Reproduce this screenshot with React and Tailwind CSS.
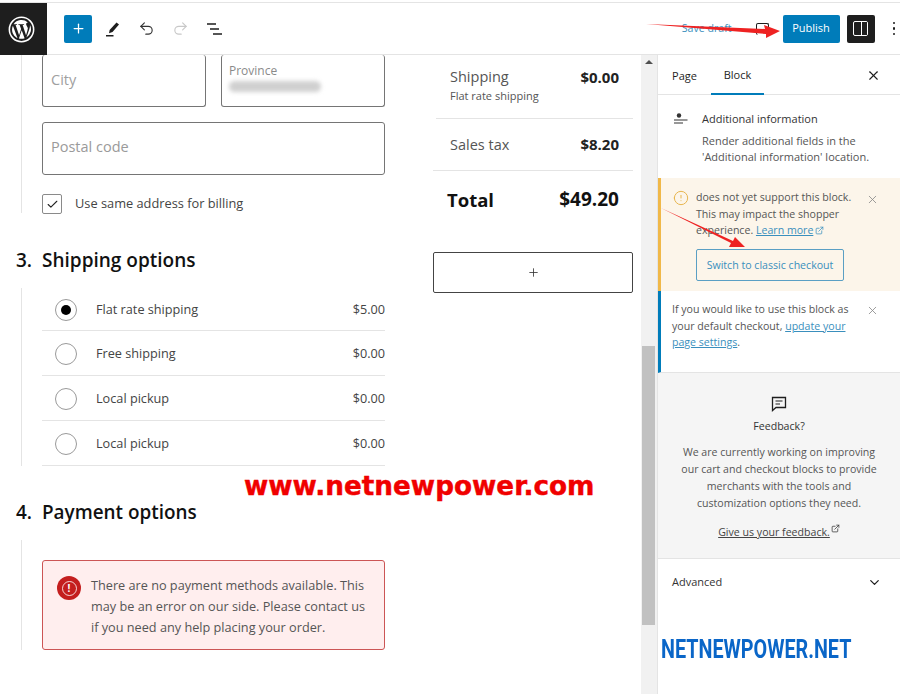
import React from 'react';
import { Plus, Undo2, Redo2, X, ChevronDown, Check, ExternalLink, Info } from 'lucide-react';

const shippingOptions = [
  { label: 'Flat rate shipping', price: '$5.00', checked: true, rowClass: 'h-[43px]' },
  { label: 'Free shipping', price: '$0.00', rowClass: 'h-[45px]' },
  { label: 'Local pickup', price: '$0.00', rowClass: 'h-[45px]' },
  { label: 'Local pickup', price: '$0.00', rowClass: 'h-[45px]' },
];

const WpLogo = () => (
  <svg width="27" height="27" viewBox="0 0 28 28" fill="none">
    <circle cx="14" cy="14" r="12.6" stroke="#fff" strokeWidth="1.6" />
    <path
      d="M4.2 14c0 3.900 2.300 7.300 5.600 8.900L5.100 10.100A9.800 9.800 0 0 0 4.200 14zM20.600 13.500c0-1.200-.4-2.100-.8-2.700-.5-.8-1-1.500-1-2.300 0-.9.700-1.800 1.700-1.800h.1A9.800 9.800 0 0 0 5.800 8.600h.6c1 0 2.600-.1 2.600-.1.500 0 .6.700 0 .8 0 0-.5.100-1.100.1l3.600 10.600 2.100-6.400-1.500-4.200c-.5 0-1-.1-1-.1-.5 0-.5-.8 0-.8 0 0 1.600.1 2.600.1s2.600-.1 2.600-.1c.5 0 .6.700 0 .8 0 0-.5.100-1.100.1l3.500 10.500 1-3.200c.4-1.300.7-2.200.7-3.100zM14.200 14.800l-2.900 8.500a9.800 9.800 0 0 0 6-.2l-.1-.1-3-8.200zM22.700 9.200c0 .3.100.700.100 1 0 1-.2 2.100-.7 3.500l-3 8.500A9.800 9.800 0 0 0 22.700 9.200z"
      fill="#fff"
    />
  </svg>
);

const Arrows = () => (
  <svg className="absolute left-0 top-0 pointer-events-none" width="900" height="694" viewBox="0 0 900 694">
    <path d="M646 24 L765 29 L764 25 L780 31 L766 38 L766 34 Z" fill="#ee2222" />
    <path d="M661 208 L733 241 L735 237 L745 247 L729 247 L731 243 Z" fill="#ee2222" />
  </svg>
);

const App = () => {
  return (
    <div className="relative w-[900px] h-[694px] overflow-hidden bg-white text-[#1e1e1e] font-['Open_Sans',sans-serif]">
      {/* top bar */}
      <header className="h-[53px] mt-[2px] border-t border-b border-[#e4e4e4] flex items-center">
        <div className="w-[47px] h-[52px] bg-[#1e1e1e] flex items-center justify-center pr-[5px] shrink-0 self-start">
          <WpLogo />
        </div>
        <div className="ml-[17px] w-7 h-7 rounded-[2px] bg-[#007cba] flex items-center justify-center">
          <Plus size={15} color="#fff" strokeWidth={2} />
        </div>
        <svg className="ml-[7px]" width="28" height="28" viewBox="0 0 28 28">
          <path d="M17.500 7.500l2.500 2-6.500 7.500-3.500 1.200.6-3.300z" fill="#1e1e1e" />
          <rect x="7" y="20" width="7.500" height="1.500" fill="#1e1e1e" />
        </svg>
        <Undo2 className="ml-[11px]" size={17} color="#333" strokeWidth={1.6} />
        <Redo2 className="ml-[17px]" size={17} color="#c8c8c8" strokeWidth={1.6} />
        <svg className="ml-[17px]" width="18" height="14" viewBox="0 0 18 14">
          <path d="M1 2h9M4 7h9M7 12h9" stroke="#1e1e1e" strokeWidth="1.500" />
        </svg>
        <span className="ml-auto text-[10.600px] text-[#3a8fbd]">Save draft</span>
        <div className="ml-[24px] w-[13px] h-[12px] rounded-[2px] border border-[#1e1e1e] border-b-0" />
        <button className="ml-[14px] w-[57px] h-7 rounded-[2px] bg-[#007cba] text-white text-[11px]">Publish</button>
        <div className="ml-[7px] w-7 h-7 rounded-[2px] bg-[#1e1e1e] flex items-center justify-center">
          <div className="w-[15px] h-[15px] rounded-[2px] border-[1.5px] border-white flex justify-end">
            <div className="w-[6px] h-full bg-[#1e1e1e] border-l-[1.5px] border-white" />
          </div>
        </div>
        <div className="ml-[18px] mr-[5px] flex flex-col gap-[3px]">
          <span className="w-[2.5px] h-[2.5px] rounded-full bg-[#1e1e1e]" />
          <span className="w-[2.5px] h-[2.5px] rounded-full bg-[#1e1e1e]" />
          <span className="w-[2.5px] h-[2.5px] rounded-full bg-[#1e1e1e]" />
        </div>
      </header>

      <div className="flex h-[639px]">
        {/* checkout canvas */}
        <main className="w-[641px] shrink-0 flex pl-[16px]">
          <div className="w-[369px] shrink-0">
            <div className="ml-[5px] pl-[20px] border-l border-[#e4e4e4] h-[158px]">
              <div className="flex gap-[15px]">
                <div className="w-[164px] h-[52px] rounded-[3px] border border-t-0 border-[#757575] pl-[8px] pt-[15px] text-[14.5px] text-[#a0a0a0] leading-[20px]">City</div>
                <div className="w-[164px] h-[52px] rounded-[3px] border border-t-0 border-[#757575] pl-[7px] pt-[8px] text-[12px] text-[#8a8a8a] leading-[16px]">
                  Province
                  <div className="mt-[2px] w-[92px] h-[11px] bg-[#d0d0d0] blur-[2px] rounded-full" />
                </div>
              </div>
              <div className="mt-[15px] w-[343px] h-[53px] rounded-[3px] border border-[#757575] pl-[8px] pb-[3px] flex items-center text-[14.5px] text-[#9a9a9a]">Postal code</div>
              <div className="mt-[19px] flex items-center">
                <div className="w-[20px] h-[20px] rounded-[2px] border border-[#8a8a8a] flex items-center justify-center">
                  <Check size={13} color="#222" strokeWidth={2} />
                </div>
                <span className="ml-[13px] text-[12.8px] text-[#444]">Use same address for billing</span>
              </div>
            </div>

            <h2 className="mt-[34px] text-[19px] leading-[26px] font-semibold text-[#111]">
              <span className="inline-block w-[26px]">3.</span>Shipping options
            </h2>
            <div className="mt-[15px] ml-[5px] pl-[20px] border-l border-[#e4e4e4] h-[178px]">
              {shippingOptions.map((option, i) => (
                <div key={i} className={`${option.rowClass} pt-[2px] border-b border-[#e4e4e4] flex items-center text-[12.7px] text-[#444]`}>
                  <div className="ml-[13px] w-[22px] h-[22px] rounded-full border border-[#9a9a9a] flex items-center justify-center">
                    {option.checked && <div className="w-[10px] h-[10px] rounded-full bg-black" />}
                  </div>
                  <span className="ml-[19px]">{option.label}</span>
                  <span className="ml-auto">{option.price}</span>
                </div>
              ))}
            </div>

            <h2 className="mt-[33px] text-[18.9px] leading-[26px] font-semibold text-[#111]">
              <span className="inline-block w-[26px]">4.</span>Payment options
            </h2>
            <div className="mt-[15px] ml-[5px] pl-[20px] pt-[20px] border-l border-[#e4e4e4] h-[110px]">
              <div className="w-[343px] h-[90px] rounded-[3px] border border-[#cc5555] bg-[#ffeeee] flex pl-[14px] pt-[14px]">
                <div className="mt-[1px] w-[24px] h-[24px] rounded-full bg-[#c41e1e] flex items-center justify-center shrink-0">
                  <div className="w-[15px] h-[15px] rounded-full border-[1.5px] border-white/80 flex items-center justify-center text-white text-[10px] font-bold leading-none">!</div>
                </div>
                <p className="ml-[10px] pr-[14px] text-[12.7px] leading-[21px] text-[#555]">
                  There are no payment methods available. This may be an error on our side. Please contact us if you need any help placing your order.
                </p>
              </div>
            </div>
          </div>

          {/* order summary */}
          <aside className="ml-[48px] w-[200px] shrink-0">
            <div className="ml-[3px] h-[64px] border-b border-[#e4e4e4] pl-[14px] pr-[14px] pt-[11px]">
              <div className="flex justify-between text-[14.5px] leading-[22px]">
                <span className="text-[#555]">Shipping</span>
                <span className="font-bold text-[15px] text-[#222]">$0.00</span>
              </div>
              <div className="text-[11px] leading-[16px] text-[#555]">Flat rate shipping</div>
            </div>
            <div className="h-[52px] border-b border-[#e4e4e4] pl-[17px] pr-[14px] flex items-center justify-between text-[14.5px]">
              <span className="text-[#555]">Sales tax</span>
              <span className="font-bold text-[15px] text-[#222]">$8.20</span>
            </div>
            <div className="h-[57px] pl-[14px] pr-[14px] flex items-center justify-between font-bold text-[#111] text-[18.5px]">
              <span>Total</span>
              <span className="text-[19px]">$49.20</span>
            </div>
            <div className="mt-[24px] h-[41px] rounded-[2px] border border-[#444] flex items-center justify-center">
              <Plus size={13} color="#333" strokeWidth={1.500} />
            </div>
          </aside>
        </main>

        {/* scrollbar */}
        <div className="w-[16px] shrink-0 bg-[#f1f1f1] relative flex justify-center">
          <div className="mt-[5px] w-0 h-0 border-x-[4px] border-x-transparent border-b-[4px] border-b-[#505050]" />
          <div className="absolute left-[1px] top-[291px] w-[13px] h-[279px] bg-[#c1c1c1]" />
        </div>

        {/* settings sidebar */}
        <aside className="flex-1 border-l border-[#e4e4e4] text-[11px] text-[#444]">
          <div className="h-[40px] border-b border-[#e4e4e4] flex text-[11px] font-medium text-[#1e1e1e] relative">
            <div className="w-[53px] pt-[3px] flex items-center justify-center">Page</div>
            <div className="w-[53px] pt-[3px] flex items-center justify-center border-b-2 border-[#007cba] h-[40px]">Block</div>
            <X className="absolute right-[19px] top-[13px]" size={15} color="#1e1e1e" strokeWidth={1.800} />
          </div>
          <div className="h-[83px] flex pl-[15px] pt-[16px]">
            <svg className="mt-[1px]" width="16" height="16" viewBox="0 0 16 16">
              <circle cx="6" cy="3.500" r="2.200" fill="#333" />
              <path d="M1 8h13.500M1 11h9" stroke="#333" strokeWidth="1.200" />
            </svg>
            <div className="ml-[13px]">
              <div className="font-medium text-[#333] leading-[16px]">Additional information</div>
              <div className="mt-[6px] leading-[16px] text-[#555]">Render additional fields in the<br />'Additional information' location.</div>
            </div>
          </div>
          <div className="h-[113px] bg-[#fcf5ea] border-l-[3px] border-[#f0b849] flex pl-[12px] pt-[11px] relative text-[10.600px]">
            <Info className="rotate-180 shrink-0 mt-[1px]" size={16} color="#e8b64f" strokeWidth={1.500} />
            <div className="ml-[7px] leading-[16.500px] text-[#555]">
              does not yet support this block.<br />This may impact the shopper<br />experience. <span className="text-[#3a8fbd] underline">Learn more</span>
              <ExternalLink className="inline ml-[2px] mb-[2px]" size={9} color="#3a8fbd" />
              <div className="mt-[10.500px] w-[148px] h-[32px] border border-[#5a9fc4] rounded-[2px] flex items-center justify-center text-[#3a8fbd]">Switch to classic checkout</div>
            </div>
            <X className="absolute right-[21px] top-[15px]" size={13} color="#888" strokeWidth={1.500} />
          </div>
          <div className="h-[82px] border-l-[3px] border-[#007cba] pl-[11px] pt-[10px] relative text-[10.600px] leading-[16.500px] text-[#555] border-b border-b-[#e4e4e4]">
            If you would like to use this block as<br />your default checkout, <span className="text-[#3a8fbd] underline">update your</span><br /><span className="text-[#3a8fbd] underline">page settings</span>.
            <X className="absolute right-[21px] top-[13px]" size={13} color="#888" strokeWidth={1.500} />
          </div>
          <div className="h-[186px] bg-[#f5f5f5] border-b border-[#e4e4e4] flex flex-col items-center pt-[22px] text-[10.600px] text-[#555]">
            <svg width="18" height="18" viewBox="0 0 18 18" fill="none">
              <path d="M2.500 2.500h13v10H6l-3.500 3z" stroke="#1e1e1e" strokeWidth="1.300" />
              <path d="M5.500 6h7M5.500 9h4.500" stroke="#1e1e1e" strokeWidth="1.200" />
            </svg>
            <div className="mt-[5px] font-medium text-[#333] leading-[16px]">Feedback?</div>
            <p className="mt-[10px] text-center leading-[17px]">We are currently working on improving<br />our cart and checkout blocks to provide<br />merchants with the tools and<br />customization options they need.</p>
            <div className="mt-[12px] underline text-[#444] flex items-start leading-[16px]">
              Give us your feedback.
              <ExternalLink className="ml-[1px]" size={9} color="#333" />
            </div>
          </div>
          <div className="h-[46px] pl-[14px] pr-[18px] flex items-center justify-between font-medium text-[#333]">
            Advanced
            <ChevronDown size={15} color="#1e1e1e" strokeWidth={2} />
          </div>
        </aside>
      </div>

      {/* watermarks */}
      <Arrows />
      <div className="absolute left-[244px] top-[470px] font-['DejaVu_Sans',sans-serif] font-bold text-[26.300px] leading-[32px] text-[#f00000] whitespace-nowrap [-webkit-text-stroke:0.4px_#f00000]">www.netnewpower.com</div>
      <div className="absolute left-[661px] top-[636px] origin-left scale-x-[0.79] font-['Roboto',sans-serif] font-bold text-[25px] leading-[28px] text-[#0a66c8] whitespace-nowrap">NETNEWPOWER.NET</div>
    </div>
  );
};

export default App;
